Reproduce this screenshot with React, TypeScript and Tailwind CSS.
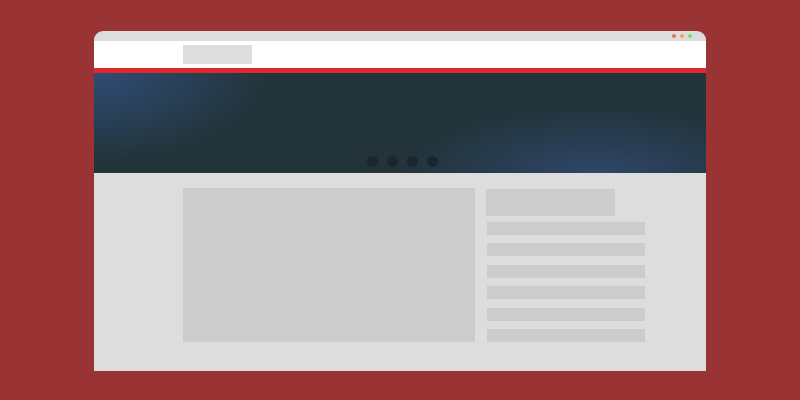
export default function App() {
  const rows = [0, 1, 2, 3, 4, 5];
  return (
    <div className="h-[400px] w-[800px] overflow-hidden bg-[#9a3434] pt-[31px]">
      <div className="ml-[94px] flex h-[340px] w-[612px] flex-col overflow-hidden rounded-t-[9px] bg-[#dddddd]">
        {/* title bar */}
        <div className="flex h-[10px] items-center justify-end gap-[4px] pr-[14px]">
          <span className="h-[4px] w-[4px] rounded-full bg-[#f0646a]" />
          <span className="h-[4px] w-[4px] rounded-full bg-[#f0a55a]" />
          <span className="h-[4px] w-[4px] rounded-full bg-[#6ee26e]" />
        </div>
        {/* header */}
        <div className="h-[27px] bg-white pl-[89px] pt-[4px]">
          <div className="h-[19px] w-[69px] bg-[#dddddd]" />
        </div>
        <div className="h-[5px] bg-[#e0282c]" />
        {/* hero */}
        <div className="relative flex h-[100px] items-end justify-center bg-[#223339] pb-[6px]">
          <div className="absolute inset-0 bg-[radial-gradient(ellipse_180px_90px_at_0%_0%,#2f4c75,transparent)]" />
          <div className="absolute inset-0 bg-[radial-gradient(ellipse_200px_70px_at_82%_100%,#2e4669,transparent)]" />
          <div className="relative ml-[5px] flex gap-[9px]">
            <span className="h-[11px] w-[11px] rounded-full bg-[#1b272c]" />
            <span className="h-[11px] w-[11px] rounded-full bg-[#1b272c]" />
            <span className="h-[11px] w-[11px] rounded-full bg-[#1b272c]" />
            <span className="h-[11px] w-[11px] rounded-full bg-[#1b272c]" />
          </div>
        </div>
        {/* content */}
        <div className="flex flex-1 gap-[11px] pl-[89px] pt-[15px]">
          <div className="h-[154px] w-[292px] bg-[#cccccc]" />
          <div className="flex flex-col pt-[1px]">
            <div className="h-[27px] w-[129px] bg-[#cccccc]" />
            <div className="mt-[6px] ml-[1px] flex flex-col gap-[8.4px]">
              {rows.map((r) => (
                <div key={r} className="h-[13px] w-[158px] bg-[#cccccc]" />
              ))}
            </div>
          </div>
        </div>
      </div>
    </div>
  );
}
